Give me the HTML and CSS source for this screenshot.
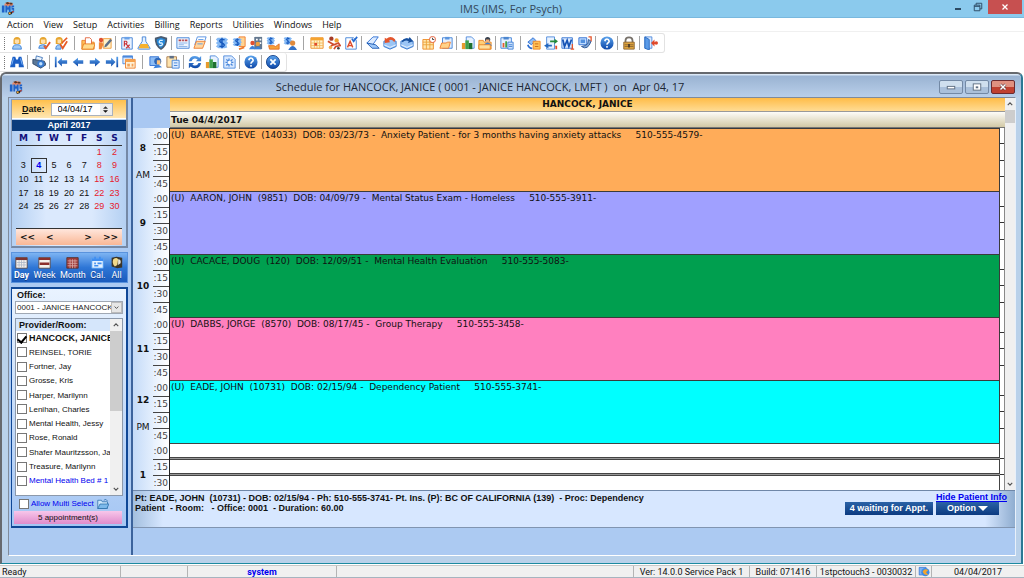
FILE: index.html
```html
<!DOCTYPE html>
<html lang="en">
<head>
<meta charset="utf-8">
<title>IMS (IMS, For Psych)</title>
<link rel="stylesheet" href="styles.css">
</head>
<body>
<svg class="defs" aria-hidden="true">
  <defs>
    <linearGradient id="gb" x1="0" y1="0" x2="0" y2="1"><stop offset="0" stop-color="#5aa2ec"/><stop offset="1" stop-color="#0d47a8"/></linearGradient>
  </defs>
  <symbol id="logo" viewBox="0 0 16 16"><path d="M4 3l5-2 5 2-1 3H4z" fill="#e98a6a"/><path d="M5 2l3-1 2 2-3 1zM10 2h3v2h-3z" fill="#5b3524"/><path d="M1 5h3v8H1zM5 5h2l1 3 1-3h2v8H9V9l-1 2-1-2v4H5zM12 5h3v2h-2v1h2v5h-3v-2h2v-1h-2z" fill="#1f62c8"/><path d="M8 13l6-1-2 3-3 1z" fill="#26201f"/><path d="M9 13h2v2H9z" fill="#f3b13c"/><path d="M13 11l2 1-2 2z" fill="#d94a2c"/></symbol>
  <symbol id="person" viewBox="0 0 16 16"><path d="M4 5q0-4 4-4t4 4v4H4z" fill="#e6a52f"/><path d="M5.500 4h5v3q-2.500 4-5 0z" fill="#ffe0ae"/><path d="M3 15q0-5 4-5h2q4 0 4 5z" fill="#9cc8f6" stroke="#3b7fd4"/></symbol>
  <symbol id="personok" viewBox="0 0 16 16"><path d="M3 5q0-4 4-4t4 4v4H3z" fill="#e6a52f"/><path d="M4.500 4h5v3q-2.500 4-5 0z" fill="#ffe0ae"/><path d="M2 14q0-4 4-4h2q3 0 3 4z" fill="#9cc8f6" stroke="#3b7fd4"/><path d="M8 11l2 3 5-7" fill="none" stroke="#e2562a" stroke-width="2"/></symbol>
  <symbol id="personedit" viewBox="0 0 16 16"><path d="M2 4q0-3 4-3t4 4v4H2z" fill="#e6a52f"/><path d="M4 4h4v3q-2 3-4 0z" fill="#ffe0ae"/><path d="M2 15q0-5 4-5h2v5z" fill="#9cc8f6" stroke="#3b7fd4"/><path d="M7 9l3 5 5-8M9 8l6-6" fill="none" stroke="#e65a25" stroke-width="2"/></symbol>
  <symbol id="folder" viewBox="0 0 16 16"><path d="M1 5h4l1 2h9v8H1z" fill="#ffc05a" stroke="#e88020"/><path d="M5 2h5l2 2v6H5z" fill="#fff" stroke="#e06038"/><path d="M3 9h13l-2 6H1z" fill="#ffdb8d" stroke="#e88020"/></symbol>
  <symbol id="note" viewBox="0 0 16 16"><path d="M6 3h9v11H6z" fill="#fff1c8" stroke="#ef9a36"/><circle cx="3.500" cy="4.500" r="2.500" fill="#e05030"/><path d="M1 7h4l1 3-2 5H1z" fill="#f0883a"/><path d="M7 13l1-3 6-7 2 2-6 7z" fill="#5c6f88"/></symbol>
  <symbol id="rx" viewBox="0 0 16 16"><path d="M2 2h12v13H2z" fill="#e9f2ff" stroke="#3d7fd6"/><path d="M5 1h6v3H5z" fill="#6ba2e8"/><path d="M5 12V6h2q2 1 0 3H5m2 0l4 5m0-4l-4 4" fill="none" stroke="#c83238" stroke-width="1.300"/></symbol>
  <symbol id="flask" viewBox="0 0 16 16"><path d="M6 1h4v5l5 8q0 1-1 1H2q-1 0-1-1l5-8z" fill="#e4f1ff" stroke="#3d7fd6"/><path d="M4 9h8l2 5H2z" fill="#f7b12d"/></symbol>
  <symbol id="shield" viewBox="0 0 16 16"><path d="M8 0l7 2q1 9-7 14Q0 11 1 2z" fill="#4b5c70"/><path d="M8 2l5 2q0 6-5 10-5-4-5-10z" fill="#2587d8"/><path d="M10 5H7q-2 2 0 3h2q2 2-1 3H6" fill="none" stroke="#d9f0ff" stroke-width="1.500"/></symbol>
  <symbol id="doc" viewBox="0 0 16 16"><path d="M1 2h14v12H1z" fill="#eef5ff" stroke="#3d7fd6"/><path d="M3 5h3M7 5h2M10 5h3" stroke="#b5454a" stroke-width="2"/><path d="M3 8h10M3 10h6M3 12h10" stroke="#85afe6"/></symbol>
  <symbol id="pages" viewBox="0 0 16 16"><path d="M5 1h10l-3 9H2z" fill="#fff" stroke="#4c8ae0"/><path d="M4 6h10l-3 8H1z" fill="#ffd6a0" stroke="#ef7a2a"/><path d="M6 4h6M5 9h6" stroke="#5797e6"/></symbol>
  <symbol id="dollar" viewBox="0 0 16 16"><path d="M3 2h9l3 2-2 2 2 2-2 2 1 3-3 1H4l-3-2 2-2-2-2 2-2-2-2z" fill="#85b9f4"/><path d="M11 4.500Q7 3 5.500 5 5 7 8 8q4 2 2 3.500-2 1-5 0M8 2v12" fill="none" stroke="#1557bc" stroke-width="1.600"/></symbol>
  <symbol id="dollardoc" viewBox="0 0 16 16"><path d="M8 1h7v11H8z" fill="#ffd392" stroke="#ef7a2a"/><use href="#dollar" x="0" y="1" width="12" height="12"/><path d="M8 15l6-2" stroke="#ef7a2a" stroke-width="2"/></symbol>
  <symbol id="bank" viewBox="0 0 16 16"><path d="M6 1h9v14H6z" fill="#64788f"/><path d="M8 3h2v2H8zM12 3h2v2h-2zM12 7h2v2h-2z" fill="#fff"/><circle cx="4" cy="8" r="2.500" fill="#e05030"/><circle cx="10" cy="9" r="2.500" fill="#f0a040"/><path d="M0 15q4-8 8 0zM7 15q3-6 7 0z" fill="#3b80d8"/></symbol>
  <symbol id="hand" viewBox="0 0 16 16"><use href="#dollar" x="0" y="0" width="11" height="11"/><path d="M3 11h6l2 1 4-3v6H4z" fill="#f6a33a" stroke="#e46a22"/></symbol>
  <symbol id="payer" viewBox="0 0 16 16"><use href="#dollar" x="0" y="0" width="11" height="11"/><circle cx="11" cy="8" r="3" fill="#e08a3c"/><path d="M6 16q5-9 10 0z" fill="#3472c8"/></symbol>
  <symbol id="cal" viewBox="0 0 16 16"><path d="M1 2h14v12H1z" fill="#fff4cf" stroke="#ee8a22"/><path d="M1 2h14v3H1z" fill="#f5a430"/><path d="M1 8h14M1 11h14M5 5v9M8 5v9M11 5v9" stroke="#f2b75a"/><path d="M5 8h3v3H5z" fill="#df4a30"/></symbol>
  <symbol id="group" viewBox="0 0 16 16"><circle cx="5" cy="3" r="2.500" fill="#a63b28"/><circle cx="11" cy="5" r="2.500" fill="#f0a030"/><path d="M1 6l7 4 5-2 2 3-5 1-2 3M3 13l5-4" fill="none" stroke="#d04b2b" stroke-width="2"/><circle cx="4" cy="13" r="2" fill="#f0b050"/><circle cx="13" cy="14" r="1.500" fill="#404040"/></symbol>
  <symbol id="adoc" viewBox="0 0 16 16"><path d="M2 2h9l3 3v10H2z" fill="#fff" stroke="#3d7fd6"/><path d="M4 13l3-7 3 7M5 11h4" fill="none" stroke="#de4a28" stroke-width="1.600"/><path d="M9 3l2 3 4-5" fill="none" stroke="#276bd0" stroke-width="2"/></symbol>
  <symbol id="scan" viewBox="0 0 16 16"><path d="M14 1H8L1 8l6 3z" fill="#dcebff" stroke="#286cd2"/><path d="M1 8l6 6h8l-4-4z" fill="#9cc6f8" stroke="#1856b0"/></symbol>
  <symbol id="boxin" viewBox="0 0 16 16"><path d="M1 6l7-3 7 3v6l-7 3-7-3z" fill="#9bc5f5" stroke="#3274cc"/><path d="M1 10l7 3 7-3" fill="none" stroke="#eef6ff"/><path d="M2 2l2 1q5-4 10 1l-1 3q-3-4-6-2l1 2-6 1z" fill="#e4552c"/></symbol>
  <symbol id="boxout" viewBox="0 0 16 16"><path d="M1 6l7-3 7 3v6l-7 3-7-3z" fill="#9bc5f5" stroke="#3274cc"/><path d="M1 10l7 3 7-3" fill="none" stroke="#eef6ff"/><path d="M2 6q3-5 8-3l1-2 4 5-6 2 1-2Q6 4 3 7z" fill="#174f9c"/></symbol>
  <symbol id="calclock" viewBox="0 0 16 16"><path d="M1 4h12v11H1z" fill="#ffe6ad" stroke="#ee8a22"/><path d="M1 7h12M1 10h12M5 4v11M9 4v11" stroke="#e9a23a"/><circle cx="12" cy="4" r="3.500" fill="#fff" stroke="#e0522c"/><path d="M12 2v2h2" fill="none" stroke="#333"/></symbol>
  <symbol id="clip" viewBox="0 0 16 16"><path d="M4 2h11v12H4z" fill="#e5f0ff" stroke="#3d7fd6"/><path d="M7 1h5v3H7z" fill="#5b95de"/><path d="M3 8h5l2-1h3l-2 7H1z" fill="#ffd28a" stroke="#ef7a2a"/></symbol>
  <symbol id="bars" viewBox="0 0 16 16"><path d="M6 1h6l3 3v10H6z" fill="#e8f2ff" stroke="#4a87da"/><path d="M1 8h4v7H1z" fill="#e69a2c"/><path d="M5 5h4v10H5z" fill="#3fa04a"/><path d="M9 8h4v7H9z" fill="#1f7030"/></symbol>
  <symbol id="pfolder" viewBox="0 0 16 16"><path d="M1 5h5l1 2h8v8H1z" fill="#ffcf78" stroke="#ea8622"/><circle cx="11" cy="4" r="3" fill="#38414f"/><path d="M9 4h4v3H9z" fill="#f2b07a"/><path d="M6 11q5-7 10 0z" fill="#4181d6"/><path d="M1 10h13v5H1z" fill="#ffdf9c" stroke="#ea8622"/></symbol>
  <symbol id="chartclip" viewBox="0 0 16 16"><path d="M1 2h12v12H1z" fill="#e5f0ff" stroke="#3d7fd6"/><path d="M4 1h6v3H4z" fill="#4c86cf"/><path d="M3 8h2v5H3z" fill="#e65c2c"/><path d="M6 6h2v7H6z" fill="#3fa04a"/><path d="M9 7h6v8H9z" fill="#cfe2fb" stroke="#3d7fd6"/><path d="M10 10h4M10 12h4" stroke="#3d7fd6"/></symbol>
  <symbol id="link" viewBox="0 0 16 16"><path d="M1 7l6-5 3 3-5 5z" fill="#8dbcf5" stroke="#2a6cd0"/><path d="M7 6h8v9H7z" fill="#ffc255" stroke="#ee8423"/><path d="M9 9h4M9 12h4" stroke="#c7641a"/><path d="M1 10q1 4 5 4" fill="none" stroke="#2a6cd0" stroke-width="2"/></symbol>
  <symbol id="swap" viewBox="0 0 16 16"><path d="M3 1h9v14H3z" fill="#e8f2ff" stroke="#4a87da"/><path d="M7 5h5V3l4 3-4 3V7H7z" fill="#258a3a"/><path d="M9 10H5V8l-5 3 5 3v-2h4z" fill="#2467bf"/><path d="M12 11h3v4h-2v-3" fill="#e3502a"/></symbol>
  <symbol id="word" viewBox="0 0 16 16"><path d="M1 2h12v12H1z" fill="#dceaff" stroke="#3475d2"/><path d="M2 4l2 8 3-7 2 7 3-8" fill="none" stroke="#1452b5" stroke-width="2"/><path d="M13 9v6m-2 0h4" stroke="#e4552c" stroke-width="1.500"/></symbol>
  <symbol id="device" viewBox="0 0 16 16"><path d="M1 2h9v8H1z" fill="#bfdcff" stroke="#2a6cd0"/><path d="M3 4h5v4H3z" fill="#5290de"/><path d="M4 12q7 5 11-6l-3-2-1 5-3 2z" fill="#7fa6d6" stroke="#234f90"/><path d="M12 1h3v5" fill="none" stroke="#e4552c" stroke-width="1.500"/></symbol>
  <symbol id="help" viewBox="0 0 16 16"><circle cx="8" cy="8" r="7.500" fill="url(#gb)"/><path d="M5.500 6Q6 3.500 8 3.500T10.500 6Q10.500 7 9 8 8 8.500 8 10M8 11.500v2" fill="none" stroke="#fff" stroke-width="1.800"/></symbol>
  <symbol id="lock" viewBox="0 0 16 16"><path d="M4 8V5q0-3.500 4-3.500T12 5v3" fill="none" stroke="#77716a" stroke-width="2"/><path d="M2 7h12v8H2z" fill="#dda33c" stroke="#8d6632"/><path d="M3 10h10M3 12h10" stroke="#8d6632"/><path d="M7 9h2v4H7z" fill="#493a28"/></symbol>
  <symbol id="exit" viewBox="0 0 16 16"><path d="M1 1h8v13H1z" fill="#dbeaff" stroke="#4a87da"/><path d="M1 1l5 3v12l-5-2z" fill="#5b9be8" stroke="#2767be"/><path d="M8 8l4-4v3h1v2h-1v3z" fill="#e0482a"/><circle cx="14" cy="8" r="2" fill="#e0482a"/></symbol>
  <symbol id="binoc" viewBox="0 0 16 16"><path d="M3 2h3l1 3h2l1-3h3l3 12h-6v-4H6v4H0z" fill="#1b5fc6"/><path d="M4 4l-2 7M12 4l2 7" stroke="#8bc0ff"/></symbol>
  <symbol id="printer" viewBox="0 0 16 16"><path d="M5 1l7 2-2 5-6-2z" fill="#e8f3ff" stroke="#3e72b6"/><path d="M1 5l13 2 2 4-6 4-9-5z" fill="#5c7897" stroke="#2d4566"/><circle cx="10" cy="10" r="4" fill="#3779ce"/><circle cx="10" cy="10" r="2" fill="#bfe0ff"/></symbol>
  <symbol id="first" viewBox="0 0 16 16"><path d="M1 2h2v12H1zM4 8l5-5v3h6v4H9v3z" fill="url(#gb)"/></symbol>
  <symbol id="prev" viewBox="0 0 16 16"><path d="M2 8l6-5v3h6v4H8v3z" fill="url(#gb)"/></symbol>
  <symbol id="next" viewBox="0 0 16 16"><path d="M14 8L8 3v3H2v4h6v3z" fill="url(#gb)"/></symbol>
  <symbol id="last" viewBox="0 0 16 16"><path d="M13 2h2v12h-2zM12 8L7 3v3H1v4h6v3z" fill="url(#gb)"/></symbol>
  <symbol id="wins" viewBox="0 0 16 16"><path d="M1 1h11v9H1z" fill="#d7e8ff" stroke="#4b88dc"/><path d="M1 1h11v2H1z" fill="#4b88dc"/><path d="M4 5h11v10H4z" fill="#fff0d6" stroke="#ee7d27"/><path d="M4 5h11v3H4z" fill="#f6a24d"/><path d="M6 10h3v3H6zM11 10h2v3h-2z" fill="#f2a25b"/></symbol>
  <symbol id="pcard" viewBox="0 0 16 16"><path d="M1 2h10v10H1z" fill="#8dbdf5" stroke="#2a6cd0"/><circle cx="10" cy="7" r="4" fill="#2f68b8"/><path d="M9 6h4v5H9z" fill="#ffc27a"/><path d="M5 15l3-4h3l4 3z" fill="#3d82dc"/></symbol>
  <symbol id="globe" viewBox="0 0 16 16"><path d="M1 2h10v11H1z" fill="#7db2f2" stroke="#2a6cd0"/><circle cx="10" cy="9" r="6" fill="#3e8be6"/><path d="M6 8q3-5 8-2l-3 3 3 4q-6 1-8-5z" fill="#f2a52f"/></symbol>
  <symbol id="paste" viewBox="0 0 16 16"><path d="M1 2h11v12H1z" fill="#ffe3ac" stroke="#a4764a"/><path d="M4 1h5v3H4z" fill="#5f7088"/><path d="M7 6h8v9H7z" fill="#dcebff" stroke="#3d7fd6"/><path d="M9 9h4M9 12h4" stroke="#3d7fd6"/></symbol>
  <symbol id="refresh" viewBox="0 0 16 16"><path d="M1 7q1-6 7-6 3 0 5 2l2-2v6H9l2-2Q6 2 4 7zM15 9q-1 6-7 6-3 0-5-2l-2 2V9h6l-2 2q5 3 7-2z" fill="url(#gb)"/></symbol>
  <symbol id="gear" viewBox="0 0 16 16"><path d="M2 1h9l4 4v10H2z" fill="#d9e9ff" stroke="#4a87da"/><path d="M8 4v9M4 8.500h9M5 5l7 7M12 5l-7 7" stroke="#4a87da" stroke-width="1.500"/><circle cx="8.500" cy="8.500" r="2" fill="#fff"/></symbol>
  <symbol id="closec" viewBox="0 0 16 16"><circle cx="8" cy="8" r="7.500" fill="url(#gb)" stroke="#123f88"/><path d="M5 5l6 6M11 5l-6 6" stroke="#fff" stroke-width="2"/></symbol>
  <symbol id="vday" viewBox="0 0 16 16"><path d="M1 2h14v13H1z" fill="#f4f1ec" stroke="#51403b"/><path d="M1 2h14v3H1z" fill="#7d3431"/><path d="M2 8h12M2 11h12M5 5v9M8 5v9M11 5v9" stroke="#aeb7c8"/></symbol>
  <symbol id="vweek" viewBox="0 0 16 16"><path d="M1 2h14v13H1z" fill="#f4f1ec" stroke="#51403b"/><path d="M1 2h14v3H1zM2 8h12v3H2z" fill="#8c2f2c"/></symbol>
  <symbol id="vmonth" viewBox="0 0 16 16"><path d="M1 2h14v13H1z" fill="#a03a38" stroke="#51302b"/><path d="M2 6h12M2 9h12M2 12h12M5 4v11M8 4v11M11 4v11" stroke="#d9a8a4"/></symbol>
  <symbol id="vcal" viewBox="0 0 16 16"><path d="M1 3h14v12H1z" fill="#e3f0ff" stroke="#4b9cf5"/><path d="M1 3h14v3H1zM4 1h2v3H4zM10 1h2v3h-2z" fill="#3f8df0"/><path d="M4 8h2v2H4zM8 8h5v2H8zM4 11h5v2H4z" fill="#3f8df0"/></symbol>
  <symbol id="vall" viewBox="0 0 16 16"><path d="M2 2l6-1 7 1v12l-6 1-7-2z" fill="#3b3528"/><path d="M4 4q4-3 6 0l-1 7-3 2q-4-4-2-9z" fill="#f1d98a"/><path d="M10 4q4 0 3 5l-3 2z" fill="#e8e6da"/></symbol>
  <symbol id="open" viewBox="0 0 16 16"><path d="M1 3h5l1 2h7v9H1z" fill="#cde6fb" stroke="#2a6da8"/><path d="M4 8h12l-3 6H1z" fill="#7db9ea" stroke="#2a6da8"/><path d="M9 3q3-3 5 1" fill="none" stroke="#2a6da8"/></symbol>
  <symbol id="min" viewBox="0 0 16 16"><path d="M2 10h12v4H2z" fill="#2c4a63"/></symbol>
  <symbol id="restore" viewBox="0 0 16 16"><path d="M5 5V2h9v9h-3" fill="none" stroke="#2c4a63" stroke-width="1.500"/><path d="M2 5h9v9H2zM2 7h9" fill="none" stroke="#2c4a63" stroke-width="1.500"/></symbol>
  <symbol id="x" viewBox="0 0 16 16"><path d="M3 3l10 10M13 3L3 13" stroke="#fff" stroke-width="2.500"/></symbol>
  <symbol id="mmin" viewBox="0 0 16 16"><rect x="2" y="7" width="12" height="4" fill="#fff" stroke="#5f6f82" stroke-width="1.500"/></symbol>
  <symbol id="mmax" viewBox="0 0 16 16"><rect x="2" y="3" width="12" height="10" fill="#fff" stroke="#5f6f82" stroke-width="1.500"/><rect x="6" y="7" width="4" height="3" fill="#5f6f82"/></symbol>
  <symbol id="mx" viewBox="0 0 16 16"><path d="M3 3l10 10M13 3L3 13" stroke="#5b3338" stroke-width="5"/><path d="M3 3l10 10M13 3L3 13" stroke="#fff" stroke-width="3"/></symbol>
  <symbol id="up" viewBox="0 0 16 16"><path d="M2 11l6-6 6 6" fill="none" stroke="#505050" stroke-width="3"/></symbol>
  <symbol id="down" viewBox="0 0 16 16"><path d="M2 5l6 6 6-6" fill="none" stroke="#505050" stroke-width="3"/></symbol>
  <symbol id="tup" viewBox="0 0 16 8"><path d="M0 8L8 0l8 8z" fill="#333"/></symbol>
  <symbol id="tdown" viewBox="0 0 16 8"><path d="M0 0l8 8 8-8z" fill="currentColor"/></symbol>
</svg>

<header class="titlebar">
  <svg class="app-logo"><use href="#logo"/></svg>
  <h1 class="app-title">IMS (IMS, For Psych)</h1>
  <div class="win-controls">
    <button class="wc" aria-label="Minimize"><svg class="i8"><use href="#min"/></svg></button>
    <button class="wc" aria-label="Restore"><svg class="i10"><use href="#restore"/></svg></button>
    <button class="wc wc-close" aria-label="Close"><svg class="i8"><use href="#x"/></svg></button>
  </div>
</header>

<nav class="menubar">
  <button>Action</button><button>View</button><button>Setup</button><button>Activities</button><button>Billing</button><button>Reports</button><button>Utilities</button><button>Windows</button><button>Help</button>
</nav>

<div class="toolbars">
  <div class="toolbar" role="toolbar" aria-label="Main">
    <i class="grip"></i>
    <button aria-label="Patient"><svg><use href="#person"/></svg></button><i class="sep wide"></i>
    <button aria-label="Check in"><svg><use href="#personok"/></svg></button><button aria-label="Check out"><svg><use href="#personedit"/></svg></button><i class="sep wide"></i>
    <button aria-label="Documents"><svg><use href="#folder"/></svg></button><button aria-label="Visit note"><svg><use href="#note"/></svg></button><i class="sep"></i>
    <button aria-label="Prescription"><svg><use href="#rx"/></svg></button><button aria-label="Lab"><svg><use href="#flask"/></svg></button><button aria-label="Immunization"><svg><use href="#shield"/></svg></button><i class="sep"></i>
    <button aria-label="Letters"><svg><use href="#doc"/></svg></button><button aria-label="Forms"><svg><use href="#pages"/></svg></button><i class="sep"></i>
    <button aria-label="Charges"><svg><use href="#dollar"/></svg></button><button aria-label="Claims"><svg><use href="#dollardoc"/></svg></button><button aria-label="Insurance"><svg><use href="#bank"/></svg></button><button aria-label="Payment"><svg><use href="#hand"/></svg></button><button aria-label="Patient account"><svg><use href="#payer"/></svg></button><i class="sep wide"></i>
    <button aria-label="Schedule"><svg><use href="#cal"/></svg></button><button aria-label="Patient flow"><svg><use href="#group"/></svg></button><button aria-label="Authorization"><svg><use href="#adoc"/></svg></button><i class="sep"></i>
    <button aria-label="Scan"><svg><use href="#scan"/></svg></button><button aria-label="Inbox"><svg><use href="#boxin"/></svg></button><button aria-label="Outbox"><svg><use href="#boxout"/></svg></button><i class="sep"></i>
    <button aria-label="Reminders"><svg><use href="#calclock"/></svg></button><button aria-label="Tasks"><svg><use href="#clip"/></svg></button><i class="sep"></i>
    <button aria-label="Reports"><svg><use href="#bars"/></svg></button><button aria-label="Patient folder"><svg><use href="#pfolder"/></svg></button><i class="sep"></i>
    <button aria-label="Summary"><svg><use href="#chartclip"/></svg></button><i class="sep wide"></i>
    <button aria-label="Link"><svg><use href="#link"/></svg></button><button aria-label="Transfer"><svg><use href="#swap"/></svg></button><button aria-label="Word"><svg><use href="#word"/></svg></button><button aria-label="Devices"><svg><use href="#device"/></svg></button><i class="sep"></i>
    <button aria-label="Help topics"><svg><use href="#help"/></svg></button><i class="sep"></i>
    <button aria-label="Lock"><svg><use href="#lock"/></svg></button><i class="sep"></i>
    <button aria-label="Exit"><svg><use href="#exit"/></svg></button>
  </div>
  <div class="toolbar" role="toolbar" aria-label="Record">
    <i class="grip"></i>
    <button aria-label="Find"><svg><use href="#binoc"/></svg></button><i class="sep"></i>
    <button aria-label="Print"><svg><use href="#printer"/></svg></button><i class="sep"></i>
    <button aria-label="First"><svg><use href="#first"/></svg></button><button aria-label="Previous"><svg><use href="#prev"/></svg></button><button aria-label="Next"><svg><use href="#next"/></svg></button><button aria-label="Last"><svg><use href="#last"/></svg></button><button aria-label="Cascade"><svg><use href="#wins"/></svg></button><i class="sep wide"></i>
    <button aria-label="Patient card"><svg><use href="#pcard"/></svg></button><button aria-label="Paste"><svg><use href="#paste"/></svg></button><i class="sep"></i>
    <button aria-label="Refresh"><svg><use href="#refresh"/></svg></button><button aria-label="Chart"><svg><use href="#bars"/></svg></button><button aria-label="Settings"><svg><use href="#gear"/></svg></button><i class="sep"></i>
    <button aria-label="Help"><svg><use href="#help"/></svg></button><i class="sep"></i>
    <button aria-label="Close schedule"><svg><use href="#closec"/></svg></button>
  </div>
</div>

<main class="window">
  <div class="window-head">
    <svg class="win-logo"><use href="#logo"/></svg>
    <h2 class="window-title">Schedule for HANCOCK, JANICE ( 0001 - JANICE HANCOCK, LMFT )&nbsp; on&nbsp; Apr 04, 17</h2>
    <div class="child-controls">
      <button aria-label="Minimize schedule"><svg class="i10"><use href="#mmin"/></svg></button>
      <button aria-label="Maximize schedule"><svg class="i10"><use href="#mmax"/></svg></button>
      <button class="red" aria-label="Close schedule window"><svg class="i8"><use href="#mx"/></svg></button>
    </div>
  </div>

  <div class="window-body">
    <aside class="sidebar">
      <section class="cal-box">
        <div class="date-row">
          <label for="date"><u>D</u>ate:</label>
          <div class="date-field">
            <input id="date" type="text" value="04/04/17">
            <div class="spin"><button aria-label="Next day"><svg><use href="#tup"/></svg></button><button aria-label="Previous day"><svg><use href="#tdown"/></svg></button></div>
          </div>
        </div>
        <div class="calendar">
          <div class="cal-title">April 2017</div>
          <table class="days">
            <thead><tr><th>M</th><th>T</th><th>W</th><th>T</th><th>F</th><th>S</th><th>S</th></tr></thead>
            <tbody>
              <tr><td></td><td></td><td></td><td></td><td></td><td class="we">1</td><td class="we">2</td></tr>
              <tr><td>3</td><td class="today">4</td><td>5</td><td>6</td><td>7</td><td class="we">8</td><td class="we">9</td></tr>
              <tr><td>10</td><td>11</td><td>12</td><td>13</td><td>14</td><td class="we">15</td><td class="we">16</td></tr>
              <tr><td>17</td><td>18</td><td>19</td><td>20</td><td>21</td><td class="we">22</td><td class="we">23</td></tr>
              <tr><td>24</td><td>25</td><td>26</td><td>27</td><td>28</td><td class="we">29</td><td class="we">30</td></tr>
            </tbody>
          </table>
          <div class="cal-nav">
            <button aria-label="Previous year">&lt;&lt;</button><button aria-label="Previous month">&lt;</button>
            <button class="push" aria-label="Next month">&gt;</button><button aria-label="Next year">&gt;&gt;</button>
          </div>
        </div>
      </section>

      <nav class="views">
        <button class="on"><svg><use href="#vday"/></svg>Day</button>
        <button><svg><use href="#vweek"/></svg>Week</button>
        <button><svg><use href="#vmonth"/></svg>Month</button>
        <button><svg><use href="#vcal"/></svg>Cal.</button>
        <button><svg><use href="#vall"/></svg>All</button>
      </nav>

      <section class="office">
        <label class="office-label" for="office">Office:</label>
        <div class="select-wrap">
          <select id="office"><option>0001 - JANICE HANCOCK, LMFT</option></select>
          <svg><use href="#down"/></svg>
        </div>
        <div class="providers">
          <div class="plist">
            <div class="phead">Provider/Room:</div>
            <label class="sel"><input type="checkbox" checked>HANCOCK, JANICE</label>
            <label><input type="checkbox">REINSEL, TORIE</label>
            <label><input type="checkbox">Fortner, Jay</label>
            <label><input type="checkbox">Grosse, Kris</label>
            <label><input type="checkbox">Harper, Marilynn</label>
            <label><input type="checkbox">Lenihan, Charles</label>
            <label><input type="checkbox">Mental Health, Jessy</label>
            <label><input type="checkbox">Rose, Ronald</label>
            <label><input type="checkbox">Shafer Mauritzsson, Ja</label>
            <label><input type="checkbox">Treasure, Marilynn</label>
            <label class="room"><input type="checkbox">Mental Health Bed # 1</label>
          </div>
          <div class="vscroll">
            <button aria-label="Scroll providers up"><svg><use href="#up"/></svg></button>
            <div class="thumb"></div>
            <button aria-label="Scroll providers down"><svg><use href="#down"/></svg></button>
          </div>
        </div>
        <div class="multi">
          <label><input type="checkbox">Allow Multi Select</label>
          <button aria-label="Open group"><svg><use href="#open"/></svg></button>
        </div>
        <div class="count">5 appointment(s)</div>
      </section>
    </aside>

    <section class="schedule">
      <div class="board">
        <div class="grid">
          <div class="col-heads">
            <div class="corner"></div>
            <div class="heads">
              <div class="prov-head">HANCOCK, JANICE</div>
              <div class="date-head">Tue 04/4/2017</div>
            </div>
          </div>
          <div class="hour">
            <div class="hr two"><b>8</b><span>AM</span></div>
            <div class="mins"><span>:00</span><span>:15</span><span>:30</span><span>:45</span></div>
            <div class="lane"><button class="appt orange">(U)&nbsp; BAARE, STEVE&nbsp; (14033)&nbsp; DOB: 03/23/73 -&nbsp; Anxiety Patient - for 3 months having anxiety attacks&nbsp; &nbsp; &nbsp;510-555-4579-</button><div class="edge"><i></i><i></i><i></i><i></i></div></div>
          </div>
          <div class="hour">
            <div class="hr"><b>9</b></div>
            <div class="mins"><span>:00</span><span>:15</span><span>:30</span><span>:45</span></div>
            <div class="lane"><button class="appt violet">(U)&nbsp; AARON, JOHN&nbsp; (9851)&nbsp; DOB: 04/09/79 -&nbsp; Mental Status Exam - Homeless&nbsp; &nbsp; &nbsp;510-555-3911-</button><div class="edge"><i></i><i></i><i></i><i></i></div></div>
          </div>
          <div class="hour">
            <div class="hr"><b>10</b></div>
            <div class="mins"><span>:00</span><span>:15</span><span>:30</span><span>:45</span></div>
            <div class="lane"><button class="appt green">(U)&nbsp; CACACE, DOUG&nbsp; (120)&nbsp; DOB: 12/09/51 -&nbsp; Mental Health Evaluation&nbsp; &nbsp; &nbsp;510-555-5083-</button><div class="edge"><i></i><i></i><i></i><i></i></div></div>
          </div>
          <div class="hour">
            <div class="hr"><b>11</b></div>
            <div class="mins"><span>:00</span><span>:15</span><span>:30</span><span>:45</span></div>
            <div class="lane"><button class="appt pink">(U)&nbsp; DABBS, JORGE&nbsp; (8570)&nbsp; DOB: 08/17/45 -&nbsp; Group Therapy&nbsp; &nbsp; &nbsp;510-555-3458-</button><div class="edge"><i></i><i></i><i></i><i></i></div></div>
          </div>
          <div class="hour">
            <div class="hr two"><b>12</b><span>PM</span></div>
            <div class="mins"><span>:00</span><span>:15</span><span>:30</span><span>:45</span></div>
            <div class="lane"><button class="appt cyan">(U)&nbsp; EADE, JOHN&nbsp; (10731)&nbsp; DOB: 02/15/94 -&nbsp; Dependency Patient&nbsp; &nbsp; &nbsp;510-555-3741-</button><div class="edge"><i></i><i></i><i></i><i></i></div></div>
          </div>
          <div class="hour short">
            <div class="hr"><b>1</b></div>
            <div class="mins"><span>:00</span><span>:15</span><span>:30</span></div>
            <div class="lane"><div class="free"><i></i><i></i><i></i></div><div class="edge"><i></i><i></i><i></i></div></div>
          </div>
        </div>
        <div class="vscroll">
          <button aria-label="Scroll up"><svg><use href="#up"/></svg></button>
          <div class="thumb"></div>
          <button aria-label="Scroll down"><svg><use href="#down"/></svg></button>
        </div>
      </div>
      <footer class="info">
        <p class="info-text">Pt: EADE, JOHN&nbsp; (10731) - DOB: 02/15/94 - Ph: 510-555-3741- Pt. Ins. (P): BC OF CALIFORNIA (139)&nbsp; - Proc: Dependency<br>Patient&nbsp; - Room:&nbsp; &nbsp;- Office: 0001&nbsp; - Duration: 60.00</p>
        <button class="navy">4 waiting for Appt.</button>
        <div class="info-right">
          <a href="#info">Hide Patient Info</a>
          <button class="navy option">Option <svg><use href="#tdown"/></svg></button>
        </div>
      </footer>
    </section>
  </div>
</main>

<footer class="status">
  <span class="s-ready">Ready</span><span class="s-gap"></span><span class="s-user">system</span><span class="s-fill"></span><span class="s-ver">Ver: 14.0.0 Service Pack 1</span><span class="s-build">Build: 071416</span><span class="s-host">1stpctouch3 - 0030032</span><span class="s-icon"><svg><use href="#globe"/></svg></span><span class="s-date">04/04/2017</span>
</footer>
</body>
</html>
```

FILE: styles.css
```css
* { box-sizing: border-box; }
html, body { height: 100%; }
body {
  margin: 0;
  display: flex;
  flex-direction: column;
  min-height: 100vh;
  background: #fff;
  font-family: "Liberation Sans", Arial, sans-serif;
  font-size: 9px;
  color: #111;
}
button {
  margin: 0;
  padding: 0;
  border: 0;
  background: none;
  font: inherit;
  color: inherit;
}
svg { display: block; }
.defs { position: absolute; width: 0; height: 0; }
.i8 { width: 8px; height: 8px; }
.i10 { width: 10px; height: 10px; }

/* Application title bar */
.titlebar {
  display: grid;
  grid-template-columns: 88px 1fr 90px;
  height: 18px;
  background: #8bcaed;
  border-bottom: 1px solid #79b8de;
}
.app-logo { width: 14px; height: 14px; margin: 1px; }
.app-title {
  margin: 0;
  font: 11px/17px "Open Sans", sans-serif;
  text-align: center;
  color: #33495c;
}
.win-controls { display: flex; justify-content: flex-end; }
.wc {
  display: flex;
  align-items: center;
  justify-content: center;
  width: 20px;
  height: 14px;
}
.wc-close { width: 34px; margin-right: 2px; background: #c75050; }

/* Menu */
.menubar {
  display: flex;
  gap: 10px;
  height: 14px;
  padding-left: 7px;
  font: 9px/13px "Open Sans", sans-serif;
  border-bottom: 1px solid #f0f0f0;
}

/* Toolbars */
.toolbars { display: flex; flex-direction: column; align-items: flex-start; padding-top: 1px; }
.toolbar {
  display: flex;
  align-items: center;
  height: 20px;
  padding: 0 5px 0 4px;
  border: 1px solid #e2e2e2;
  border-left: 0;
  border-radius: 0 3px 3px 0;
}
.toolbar + .toolbar { height: 19px; border-top: 0; }
.toolbar button { width: 17px; height: 17px; }
.toolbar svg { width: 14px; height: 14px; margin: 0 auto; }
.grip { width: 4px; height: 13px; border-left: 1px dotted #777; }
.sep {
  width: 5px;
  height: 14px;
  background: linear-gradient(#a4a4a4, #a4a4a4) center / 1px 100% no-repeat;
}
.sep.wide { width: 10px; }

/* Schedule window */
.window {
  flex: 1;
  display: flex;
  flex-direction: column;
  min-height: 0;
  margin-right: 1px;
  padding: 0 5px 7px 6px;
  background: #b9d1ea;
  border: 2px solid #66696e;
  border-right-color: #2b7894;
  border-bottom: 1px solid #1c8aa0;
  border-radius: 6px 6px 0 0;
}
.window-head {
  display: grid;
  grid-template-columns: 44px 1fr 107px;
  align-items: center;
  height: 23px;
  margin: 0 -5px 0 -6px;
  padding: 2px 6px 0 6px;
  background: linear-gradient(#dbe8f6 0, #dbe8f6 1px, #9ab3d2 2px, #b9cfea);
  border-radius: 5px 5px 0 0;
}
.win-logo { width: 14px; height: 14px; margin-left: 1px; }
.window-title {
  margin: 0;
  font: 11px/20px "Open Sans", sans-serif;
  text-align: center;
  white-space: nowrap;
  color: #1c2733;
}
.child-controls { display: flex; justify-content: flex-end; gap: 2px; }
.child-controls button {
  display: flex;
  align-items: center;
  justify-content: center;
  width: 24px;
  height: 14px;
  background: linear-gradient(#cfdfee 50%, #aac0da 50%);
  border: 1px solid #7389a5;
  border-radius: 2px;
}
.child-controls .red { background: linear-gradient(#e09080 50%, #c04030 50%); border-color: #6b2a30; }

.window-body {
  flex: 1;
  display: grid;
  grid-template-columns: 122px 1fr;
  min-height: 0;
  background: #accaf2;
  border: 1px solid #7f8b9c;
  border-right-color: #e8f0fa;
  border-bottom-color: #fff;
}

/* Sidebar */
.sidebar {
  display: flex;
  flex-direction: column;
  gap: 4px;
  min-width: 0;
  padding: 1px 3px 0 2px;
}
.cal-box {
  background: #d5e6fb;
  border: 1px solid #8d9cb3;
  border-right: 2px solid #7589a6;
  border-bottom: 2px solid #7589a6;
}
.date-row {
  display: flex;
  align-items: center;
  gap: 6px;
  height: 18px;
  padding-left: 10px;
  background: linear-gradient(#ffc04c, #ffe7b4);
  font-weight: bold;
}
.date-field { display: flex; background: #fff; border: 1px solid #aab2bd; }
.date-field input {
  width: 48px;
  height: 11px;
  padding: 0 0 0 6px;
  border: 0;
  background: #fff;
  font: 9px/11px "Liberation Sans", sans-serif;
}
.spin { display: flex; flex-direction: column; justify-content: center; gap: 1px; width: 12px; background: #ececec; }
.spin svg { width: 5px; height: 3px; margin: 0 auto; }
.calendar { padding: 0 4px 1px; background: linear-gradient(90deg, #b4d0f2, #dbe9fd 30%, #dbe9fd 70%, #b4d0f2); border-top: 1px solid #fff; }
.cal-title {
  height: 11px;
  margin: 1px -4px 1px;
  background: #0b3c7c;
  color: #fff;
  font-weight: bold;
  line-height: 11px;
  text-align: center;
}
.days {
  width: 100%;
  height: 97px;
  table-layout: fixed;
  border-collapse: collapse;
  text-align: center;
  border-bottom: 1px solid #333;
}
.days th, .days td { padding: 0; height: 13px; line-height: 11px; }
.days th { font-family: "DejaVu Sans", sans-serif; color: #11117c; border-bottom: 1px solid #333; }
.days tbody::after { content: ""; display: table-row; height: 14px; }
.days .we { color: #e6202c; }
.days .today { color: #0000f0; font-weight: bold; border: 1px solid #333; }
.cal-nav {
  display: flex;
  align-items: center;
  gap: 11px;
  height: 16px;
  padding: 0 4px;
  background: linear-gradient(#ffe6dc, #f9b795);
  font: bold 9px/12px "DejaVu Sans", sans-serif;
}
.push { margin-left: auto; }

.views {
  display: flex;
  justify-content: space-between;
  height: 31px;
  padding: 2px 4px 0 2px;
  background: linear-gradient(#7db4f3, #2e76d6 50%, #1a5bbd);
  border: 1px solid #5a93dd;
  color: #fff;
  font-family: Roboto, sans-serif;
}
.views button { line-height: 13px; text-shadow: 0 1px #103f8c; }
.views svg { width: 13px; height: 13px; margin: 0 auto; }
.views .on { font-weight: bold; }

.office {
  padding: 0 3px 2px;
  background: linear-gradient(#e9f3ff, #a5c6f3);
  border: 2px solid #0f4796;
  border-left-width: 1px;
}
.office-label { display: block; margin-left: 2px; line-height: 12px; font-weight: bold; }
.select-wrap { position: relative; height: 13px; }
.select-wrap select {
  width: 100%;
  height: 13px;
  padding: 0 11px 0 1px;
  appearance: none;
  background: #fff;
  border: 1px solid #a0a8b4;
  border-radius: 0;
  font: 8px/11px "Liberation Sans", sans-serif;
  color: #222;
}
.select-wrap svg { position: absolute; top: 1px; right: 1px; width: 11px; height: 11px; padding: 2px; background: #e6e6e6; border: 1px solid #bbb; pointer-events: none; }
.providers {
  display: flex;
  height: 178px;
  margin-top: 4px;
  background: #fff;
  border: 1px solid #8c99ab;
}
.plist { flex: 1; display: flex; flex-direction: column; min-width: 0; padding-bottom: 7px; overflow: hidden; }
.phead { padding-left: 3px; height: 12px; line-height: 12px; font-weight: bold; background: #d5e6fb; }
.plist label {
  flex: 1;
  display: flex;
  align-items: center;
  gap: 2px;
  padding-left: 1px;
  font-size: 8px;
  white-space: nowrap;
}
.office input[type="checkbox"] {
  flex: none;
  width: 10px;
  height: 10px;
  margin: 0;
  appearance: none;
  background: #fff;
  border: 1px solid #777;
}
.office input[type="checkbox"]:checked::after {
  content: "";
  display: block;
  width: 4px;
  height: 7px;
  margin: 0 auto;
  border: solid #000;
  border-width: 0 2px 2px 0;
  rotate: 40deg;
}
.plist .sel { font-size: 9px; font-weight: bold; }
.plist .room, .multi { color: #0000f0; }
.vscroll { display: flex; flex-direction: column; width: 12px; background: #f0f0f0; }
.vscroll button { display: flex; align-items: center; justify-content: center; height: 12px; }
.vscroll svg { width: 6px; height: 6px; }
.thumb { background: #cdcdcd; }
.vscroll button:last-child { margin-top: auto; }
.providers .thumb { height: 80px; }
.multi { display: flex; align-items: center; gap: 3px; height: 15px; padding-left: 4px; font-size: 8px; }
.multi label { display: flex; align-items: center; gap: 2px; white-space: nowrap; }
.multi svg { width: 12px; height: 12px; }
.count {
  height: 13px;
  margin: 0 1px 0 -1px;
  line-height: 13px;
  font-size: 8px;
  text-align: center;
  background: linear-gradient(#f7c6ea, #e08ccb);
}

/* Schedule board */
.schedule {
  display: flex;
  flex-direction: column;
  min-width: 0;
  border-left: 2px solid #3c639c;
  font-family: "DejaVu Sans", Verdana, sans-serif;
}
.board { flex: 1; display: flex; min-height: 0; }
.grid { flex: 1; display: flex; flex-direction: column; min-width: 0; }
.col-heads { display: grid; grid-template-columns: 37px 1fr; height: 30px; }
.corner { background: #a9c8f2; }
.prov-head {
  height: 14px;
  line-height: 13px;
  text-align: center;
  font-weight: bold;
  background: linear-gradient(#ffbc48, #ffdc94);
  border-bottom: 1px solid #999;
}
.date-head {
  height: 16px;
  padding-left: 1px;
  line-height: 16px;
  font-weight: bold;
  background: linear-gradient(#fdfcf8, #d2c9a6);
  border-bottom: 1px solid #777;
}
.hour { flex: 4 1 0; display: grid; grid-template-columns: 20px 17px 1fr; min-height: 0; }
.hour.short { flex-grow: 3; }
.hr {
  display: flex;
  flex-direction: column;
  align-items: center;
  gap: 15px;
  padding-top: 26px;
  line-height: 12px;
  background: linear-gradient(90deg, #c5dbf8, #e4effd);
  border-bottom: 1px solid #99a4b3;
}
.hr.two { padding-top: 14px; }
.mins {
  display: flex;
  flex-direction: column;
  background: linear-gradient(90deg, #e6f0fd, #fff);
  border-bottom: 1px solid #99a4b3;
  border-right: 1px solid #222;
}
.mins span { flex: 1; line-height: 15px; min-height: 0; text-align: right; padding-right: 1px; color: #444; border-top: 1px solid #444; }
.mins span:first-child { border-top-color: transparent; }
.lane { display: grid; grid-template-columns: 1fr 5px; background: #999; }
.appt {
  display: flex;
  align-items: flex-start;
  margin-bottom: 1px;
  padding: 0 1px;
  line-height: 12px;
  text-align: left;
  white-space: nowrap;
  overflow: hidden;
  border: 1px solid #3a3a3a;
  border-left: 0;
}
.orange { background: #ffac59; }
.violet { background: #a0a0ff; }
.green { background: #009f4f; }
.pink { background: #ff80bf; }
.cyan { background: #00ffff; }
.free, .edge { display: flex; flex-direction: column; gap: 1px; background: #999; }
.free { padding-bottom: 1px; }
.free i { flex: 1; background: #fff; border: 1px solid #444; border-left: 0; }
.edge { gap: 0; border-right: 1px solid #888; }
.edge i { flex: 1; background: #fff; border-bottom: 1px solid #333; }
.board .vscroll { width: 10px; }
.board .thumb { height: 13px; }

/* Patient information strip */
.info {
  display: flex;
  align-items: flex-start;
  gap: 3px;
  height: 38px;
  margin-bottom: 27px;
  padding: 1px 8px 0 2px;
  background: linear-gradient(90deg, #a3bfdf, #d7e7ff 30px, #d7e7ff calc(100% - 30px), #8fadd0);
  border-top: 1px solid #6f87a8;
  border-bottom: 1px solid #8195b1;
  font: bold 9px/10px "Liberation Sans", sans-serif;
}
.info-text { flex: 1; margin: 1px 0 0; }
.navy {
  height: 13px;
  padding: 0 5px;
  line-height: 13px;
  color: #fff;
  background: linear-gradient(#2a62a6, #0c3a80);
}
.info > .navy { margin-top: 10px; }
.info-right a { display: block; line-height: 10px; color: #0000f0; }
.option { display: flex; align-items: center; justify-content: center; gap: 2px; width: 63px; }
.option svg { width: 10px; height: 5px; }

/* Status bar */
.status {
  display: flex;
  height: 13px;
  margin-top: 1px;
  font-family: Roboto, sans-serif;
  line-height: 12px;
  background: #f0f0f0;
  border-top: 1px solid #c8c8c8;
  border-bottom: 1px solid #a6b4bf;
}
.status span { border-right: 1px solid #b4b4b4; text-align: center; white-space: nowrap; }
.status .s-ready { width: 121px; padding-left: 2px; text-align: left; }
.s-gap { width: 67px; }
.status .s-user { width: 149px; color: #0000f0; font-weight: bold; }
.s-fill { flex: 1; }
.s-ver { width: 116px; }
.s-build { width: 67px; }
.s-host { width: 99px; }
.s-icon { width: 16px; }
.s-icon svg { width: 12px; height: 11px; margin: 0 auto; }
.status .s-date { width: 92px; border-right: 0; }
```
